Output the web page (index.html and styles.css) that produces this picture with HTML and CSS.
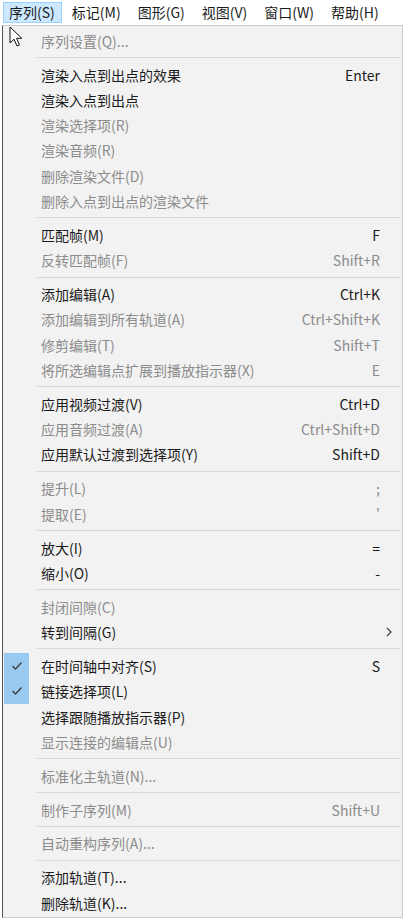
FILE: index.html
```html
<!DOCTYPE html>
<html lang="zh-CN">

<head>
  <meta charset="UTF-8">
  <meta name="viewport" content="width=device-width, initial-scale=1.0">
  <title>序列菜单</title>
  <link rel="stylesheet" href="styles.css">
</head>

<body>
  <div class="menubar">
    <span class="bar-item active">序列(S)</span>
    <span class="bar-item">标记(M)</span>
    <span class="bar-item">图形(G)</span>
    <span class="bar-item">视图(V)</span>
    <span class="bar-item">窗口(W)</span>
    <span class="bar-item">帮助(H)</span>
  </div>

  <div class="dropdown">
    <ul class="menu">
      <li class="item off"><span class="check"></span><span class="label">序列设置(Q)...</span><span class="key"></span></li>
      <li class="sep"></li>
      <li class="item"><span class="check"></span><span class="label">渲染入点到出点的效果</span><span class="key">Enter</span></li>
      <li class="item"><span class="check"></span><span class="label">渲染入点到出点</span><span class="key"></span></li>
      <li class="item off"><span class="check"></span><span class="label">渲染选择项(R)</span><span class="key"></span></li>
      <li class="item off"><span class="check"></span><span class="label">渲染音频(R)</span><span class="key"></span></li>
      <li class="item off"><span class="check"></span><span class="label">删除渲染文件(D)</span><span class="key"></span></li>
      <li class="item off"><span class="check"></span><span class="label">删除入点到出点的渲染文件</span><span class="key"></span></li>
      <li class="sep"></li>
      <li class="item"><span class="check"></span><span class="label">匹配帧(M)</span><span class="key">F</span></li>
      <li class="item off"><span class="check"></span><span class="label">反转匹配帧(F)</span><span class="key">Shift+R</span></li>
      <li class="sep"></li>
      <li class="item"><span class="check"></span><span class="label">添加编辑(A)</span><span class="key">Ctrl+K</span></li>
      <li class="item off"><span class="check"></span><span class="label">添加编辑到所有轨道(A)</span><span class="key">Ctrl+Shift+K</span></li>
      <li class="item off"><span class="check"></span><span class="label">修剪编辑(T)</span><span class="key">Shift+T</span></li>
      <li class="item off"><span class="check"></span><span class="label">将所选编辑点扩展到播放指示器(X)</span><span class="key">E</span></li>
      <li class="sep"></li>
      <li class="item"><span class="check"></span><span class="label">应用视频过渡(V)</span><span class="key">Ctrl+D</span></li>
      <li class="item off"><span class="check"></span><span class="label">应用音频过渡(A)</span><span class="key">Ctrl+Shift+D</span></li>
      <li class="item"><span class="check"></span><span class="label">应用默认过渡到选择项(Y)</span><span class="key">Shift+D</span></li>
      <li class="sep"></li>
      <li class="item off"><span class="check"></span><span class="label">提升(L)</span><span class="key">;</span></li>
      <li class="item off"><span class="check"></span><span class="label">提取(E)</span><span class="key">'</span></li>
      <li class="sep"></li>
      <li class="item"><span class="check"></span><span class="label">放大(I)</span><span class="key">=</span></li>
      <li class="item"><span class="check"></span><span class="label">缩小(O)</span><span class="key">-</span></li>
      <li class="sep"></li>
      <li class="item off"><span class="check"></span><span class="label">封闭间隙(C)</span><span class="key"></span></li>
      <li class="item"><span class="check"></span><span class="label">转到间隔(G)</span><span class="key"></span>
        <svg class="arrow" width="6" height="10" viewBox="0 0 6 10"><path d="M1 1 L5 5 L1 9" fill="none" stroke="#333" stroke-width="1.1"/></svg>
      </li>
      <li class="sep"></li>
      <li class="item"><span class="check on"><svg width="12" height="10" viewBox="0 0 12 10"><path d="M1.5 5 L4.5 8 L10.5 1.5" fill="none" stroke="#3d3d3d" stroke-width="1.3"/></svg></span><span class="label">在时间轴中对齐(S)</span><span class="key">S</span></li>
      <li class="item"><span class="check on"><svg width="12" height="10" viewBox="0 0 12 10"><path d="M1.5 5 L4.5 8 L10.5 1.5" fill="none" stroke="#3d3d3d" stroke-width="1.3"/></svg></span><span class="label">链接选择项(L)</span><span class="key"></span></li>
      <li class="item"><span class="check"></span><span class="label">选择跟随播放指示器(P)</span><span class="key"></span></li>
      <li class="item off"><span class="check"></span><span class="label">显示连接的编辑点(U)</span><span class="key"></span></li>
      <li class="sep"></li>
      <li class="item off"><span class="check"></span><span class="label">标准化主轨道(N)...</span><span class="key"></span></li>
      <li class="sep"></li>
      <li class="item off"><span class="check"></span><span class="label">制作子序列(M)</span><span class="key">Shift+U</span></li>
      <li class="sep"></li>
      <li class="item off"><span class="check"></span><span class="label">自动重构序列(A)...</span><span class="key"></span></li>
      <li class="sep"></li>
      <li class="item"><span class="check"></span><span class="label">添加轨道(T)...</span><span class="key"></span></li>
      <li class="item"><span class="check"></span><span class="label">删除轨道(K)...</span><span class="key"></span></li>
    </ul>
  </div>

  <!-- mouse pointer over the menu -->
  <svg class="cursor" width="14" height="22" viewBox="0 0 14 22">
    <path d="M1 1 L1 17 L5 13.2 L8 20 L10.5 19 L7.6 12.3 L12.8 12.3 Z" fill="#fff" stroke="#111" stroke-width="1" stroke-linejoin="round"/>
  </svg>
</body>

</html>
```

FILE: styles.css
```css
/* Global Styles */
body {
  margin: 0;
  background: #ffffff;
  font-family: 'Noto Sans CJK SC', 'Noto Sans', sans-serif;
  font-size: 14px;
  color: #1b1b1b;
  position: relative;
}

/* Menu Bar */
.menubar {
  display: flex;
  height: 25px;
  padding-left: 1px;
  align-items: center;
  background: #ffffff;
}

.bar-item {
  height: 19px;
  line-height: 19px;
  margin: 0 2px;
  padding: 0 6px 0 5px;
  border: 1px solid transparent;
  white-space: nowrap;
}

.bar-item.active {
  background: #cce8ff;
  border-color: #99d1ff;
}

/* Dropdown */
.dropdown {
  margin-left: 2px;
  width: 401px;
  background: #f2f2f2;
  border: 1px solid #cccccc;
  border-left-color: #555555;
  box-sizing: border-box;
  padding: 2px 0 2px 1px;
}

.menu {
  list-style: none;
  margin: 0;
  padding: 0;
}

.item {
  display: flex;
  align-items: center;
  height: 25.3px;
  padding-right: 22px;
  white-space: nowrap;
}

.item.off {
  color: #8c8c8c;
}

.check {
  flex: 0 0 25px;
  height: 100%;
  margin-right: 12px;
  display: flex;
  align-items: center;
  justify-content: center;
}

.check.on {
  background: #99c9ef;
}

.label {
  flex: 1;
}

.key {
  text-align: right;
}

.arrow {
  margin-right: -12px;
}

.sep {
  height: 8.6px;
  display: flex;
  align-items: center;
  margin: 0 2px 0 33px;
}

.sep::after {
  content: "";
  flex: 1;
  height: 1px;
  background: #d7d7d7;
}

/* Pointer */
.cursor {
  position: absolute;
  left: 9px;
  top: 26px;
}
```
